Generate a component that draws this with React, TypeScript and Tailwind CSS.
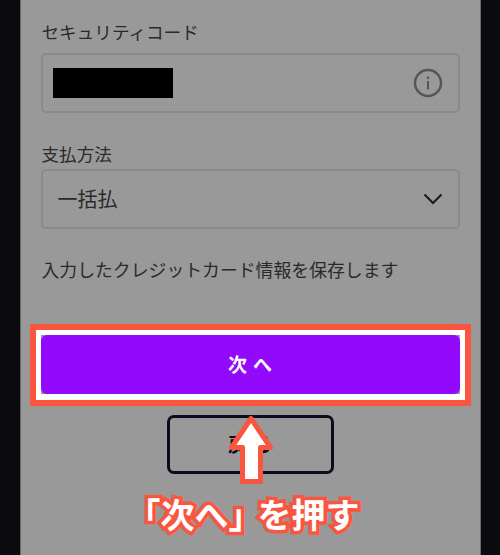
const jp = "font-['Noto_Sans_CJK_JP','Noto_Sans',sans-serif]"

function InfoIcon() {
  return (
    <svg width="30" height="30" viewBox="0 0 30 30" fill="none">
      <circle cx="15" cy="15" r="13" stroke="#555555" strokeWidth="2.4" />
      <circle cx="15" cy="9.8" r="1.4" fill="#555555" />
      <rect x="14" y="13" width="2" height="8.5" fill="#555555" />
    </svg>
  )
}

function ChevronIcon() {
  return (
    <svg width="20" height="12" viewBox="0 0 20 12" fill="none">
      <path d="M1.5 1.5L10 10L18.5 1.5" stroke="#1c1c1c" strokeWidth="2.2" />
    </svg>
  )
}

function UpArrow() {
  return (
    <svg width="60" height="76" viewBox="0 0 60 76" fill="none">
      <path
        d="M30 6.5L49.5 35.5H39.5V69.5H21.5V35.5H10.5Z"
        fill="#ffffff"
        stroke="#f9553f"
        strokeWidth="5"
        strokeLinejoin="round"
      />
    </svg>
  )
}

export default function App() {
  return (
    <div className={`relative h-[555px] w-[500px] overflow-hidden bg-[#0a0a0f] ${jp}`}>
      <div className="mx-auto h-[555px] w-[461px] border-x border-x-[#6a6a6a] bg-[#999999] px-5">
        <div className="pl-px pt-[20px] text-[17.6px] leading-[24px] text-[#2a2a2a]">セキュリティコード</div>
        <div className="mt-[9px] flex h-[60px] items-center justify-between rounded-[5px] border-2 border-[#8a8a8a] pl-[10px] pr-[15px]">
          <div className="h-[30px] w-[120px] bg-black" />
          <InfoIcon />
        </div>

        <div className="mt-[29px] pl-px text-[17.6px] leading-[24px] text-[#2a2a2a]">支払方法</div>
        <div className="mt-[3px] flex h-[60px] items-center justify-between rounded-[5px] border-2 border-[#8a8a8a] pl-[15px] pr-[15px]">
          <span className="text-[20px] text-[#2a2a2a]">一括払</span>
          <ChevronIcon />
        </div>

        <div className="mt-[28px] pl-px text-[17.85px] leading-[24px] text-[#2a2a2a]">入力したクレジットカード情報を保存します</div>

        <button className="mt-[54px] flex h-[59px] w-full items-center justify-center rounded-[6px] bg-[#9309fb] pl-[6px] text-[19px] font-bold tracking-[6px] text-white">
          次へ
        </button>
        <button className="mx-auto mt-[21px] flex h-[59px] w-[167px] items-center justify-center rounded-[7px] border-[3px] border-[#0c0c1c] pl-[6px] text-[19px] font-bold tracking-[6px] text-[#0c0c1c]">
          戻る
        </button>
      </div>

      <div className="absolute left-[30px] top-[324px] h-[82px] w-[441px] border-[6px] border-[#f9553f]">
        <div className="h-full w-full border-[5px] border-b-[6px] border-white" />
      </div>
      <div className="absolute left-[221px] top-[412px]">
        <UpArrow />
      </div>
      <div className="absolute left-[-7px] top-[490px] flex w-[500px] justify-center text-[34px] font-bold leading-[48px] text-white [-webkit-text-stroke:7px_#f9553f] [paint-order:stroke_fill]">
        <span>「次へ」</span>
        <span className="-ml-[5px]">を押す</span>
      </div>
    </div>
  )
}
